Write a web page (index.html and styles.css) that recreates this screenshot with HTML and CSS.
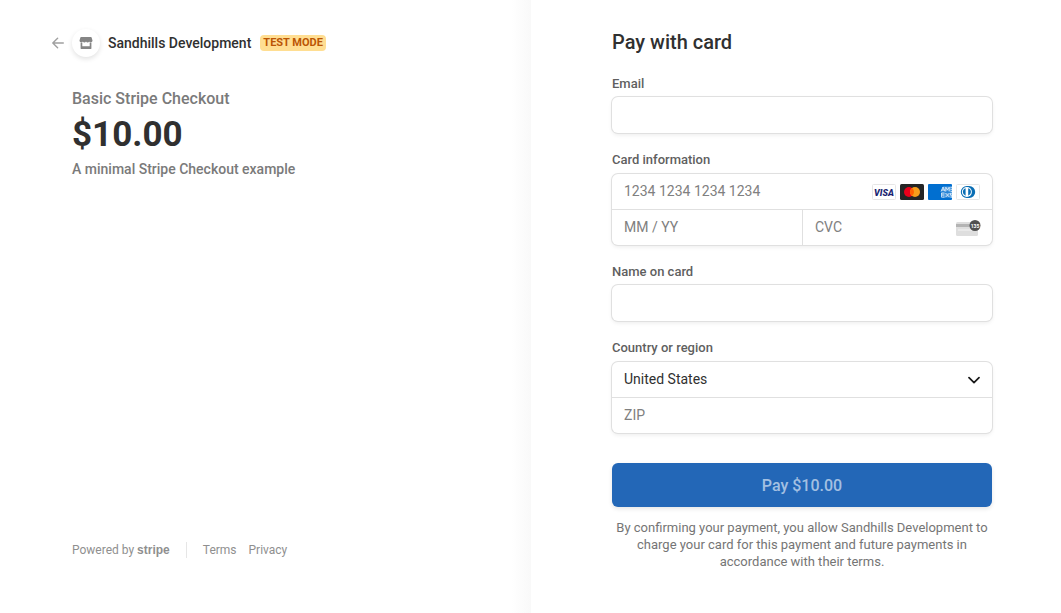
FILE: index.html
```html
<!DOCTYPE html>
<html lang="en">
<head>
    <meta charset="UTF-8">
    <meta name="viewport" content="width=device-width, initial-scale=1.0">
    <title>Sandhills Development</title>
    <link rel="stylesheet" href="styles.css">
</head>
<body>
<div class="app">
    <section class="overview">
        <header class="header">
            <a class="business" href="#" aria-label="Back to Sandhills Development">
                <svg class="back" viewBox="0 0 12 12" width="12" height="12" fill="none" stroke="#a0a0a0" stroke-width="1.4" stroke-linecap="round" stroke-linejoin="round"><path d="M11.3 6H1M5.6 1.2L.8 6l4.8 4.8"/></svg>
                <span class="avatar">
                    <svg viewBox="0 0 14 14" width="14" height="14" fill="#858585"><path d="M2 1h10a.6.6 0 0 1 .6.5l.9 3.1c0 1-.8 1.8-1.7 1.8-.8 0-1.4-.4-1.6-1-.3.6-.9 1-1.6 1S7.300 6 7 5.400C6.700 6 6.100 6.400 5.400 6.400s-1.300-.4-1.600-1c-.2.6-.8 1-1.600 1C1.300 6.400.5 5.600.5 4.600l.9-3.100A.6.6 0 0 1 2 1z"/><path d="M1.600 6.800h1.700v3.400h7.400V6.800h1.700v5.400a.9.9 0 0 1-.9.9h-9a.9.9 0 0 1-.9-.9z"/></svg>
                </span>
                <span class="business-name">Sandhills Development</span>
            </a>
            <span class="tag">TEST MODE</span>
        </header>
        <div class="product">
            <h1 class="product-name">Basic Stripe Checkout</h1>
            <div class="price">$10.00</div>
            <div class="description">A minimal Stripe Checkout example</div>
        </div>
        <footer class="footer">
            <a class="powered" href="#">Powered by <span class="stripe">stripe</span></a>
            <nav class="links">
                <a href="#">Terms</a>
                <a href="#">Privacy</a>
            </nav>
        </footer>
    </section>

    <main class="payment">
        <form class="form">
            <h2 class="title">Pay with card</h2>

            <div class="field">
                <label for="email">Email</label>
                <div class="box">
                    <input class="single" type="text" id="email">
                </div>
            </div>

            <div class="field">
                <label for="cardNumber">Card information</label>
                <div class="box stacked">
                    <div class="row">
                        <input type="text" id="cardNumber" placeholder="1234 1234 1234 1234">
                        <div class="brands">
                            <!-- Visa -->
                            <svg viewBox="0 0 24 16" width="24" height="16"><rect x=".5" y=".5" width="23" height="15" rx="1" fill="#fff" stroke="#e6e6e6"/><text class="visa" x="12" y="11.500" text-anchor="middle">VISA</text></svg>
                            <!-- Mastercard -->
                            <svg viewBox="0 0 24 16" width="24" height="16"><rect width="24" height="16" rx="1.500" fill="#252525"/><circle cx="9" cy="8" r="5" fill="#eb001b"/><circle cx="15" cy="8" r="5" fill="#f79e1b"/><path d="M12 4a5 5 0 0 1 0 8 5 5 0 0 1 0-8z" fill="#ff5f00"/></svg>
                            <!-- Amex -->
                            <svg viewBox="0 0 24 16" width="24" height="16"><rect width="24" height="16" rx="1" fill="#016fd0"/><path d="M15 2.500h9v5h-11zM13 8.500h11v5h-9z" fill="#fff" opacity=".3"/><path d="M13 7.500l2-4.500 2 4.500M13.800 6h2.500M17.800 7.500V3.200l1.700 2.600 1.700-2.600v4.300M22.500 3.300H24M22.500 5.400H24M22.500 7.500H24M16.500 9h-3v4.200h3M13.500 11h2.700M17.500 9l4 4.200M21.500 9l-4 4.200M24 9.200h-1.500v2H24v2h-1.500" fill="none" stroke="#fff" stroke-width=".7"/></svg>
                            <!-- Diners -->
                            <svg viewBox="0 0 24 16" width="24" height="16"><rect x=".5" y=".5" width="23" height="15" rx="1" fill="#fff" stroke="#e6e6e6"/><path d="M10.800 2h2.400a6 6 0 0 1 0 12h-2.400a6 6 0 0 1 0-12z" fill="#0a6eb4"/><circle cx="10.900" cy="8" r="5" fill="#fff"/><path d="M9.600 4.200a4 4 0 0 0 0 7.600zM12.200 4.200a4 4 0 0 1 0 7.600z" fill="#0a6eb4"/></svg>
                        </div>
                    </div>
                    <div class="row split">
                        <input type="text" placeholder="MM / YY" aria-label="Expiration">
                        <div class="cvc">
                            <input type="text" placeholder="CVC" aria-label="CVC">
                            <svg viewBox="0 0 26 18" width="26" height="18"><rect x="1" y="3" width="22" height="14" rx="1.500" fill="#dedede"/><rect x="1" y="5" width="22" height="3" fill="#b4b4b4"/><rect x="3" y="10" width="14" height="2" fill="#e9e9e9"/><circle cx="20" cy="6.500" r="5.500" fill="#505050"/><text class="digits" x="20" y="8.500" text-anchor="middle">135</text></svg>
                        </div>
                    </div>
                </div>
            </div>

            <div class="field">
                <label for="name">Name on card</label>
                <div class="box">
                    <input class="single" type="text" id="name">
                </div>
            </div>

            <div class="field">
                <label for="country">Country or region</label>
                <div class="box stacked">
                    <div class="row country">
                        <select id="country">
                            <option>United States</option>
                        </select>
                        <svg class="chevron" viewBox="0 0 12 12" width="12" height="12" fill="none" stroke="#1a1a1a" stroke-width="1.700" stroke-linecap="round" stroke-linejoin="round"><path d="M1 3.700l5 5 5-5"/></svg>
                    </div>
                    <div class="row">
                        <input type="text" placeholder="ZIP" aria-label="ZIP">
                    </div>
                </div>
            </div>

            <button class="pay" type="button">Pay $10.00</button>
            <p class="terms">By confirming your payment, you allow Sandhills Development to charge your card for this payment and future payments in accordance with their terms.</p>
        </form>
    </main>
</div>
</body>
</html>
```
FILE: styles.css
```css
* {
    box-sizing: border-box;
}

body {
    margin: 0;
    background: #fff;
    color: #303030;
    font-family: Roboto, "Liberation Sans", sans-serif;
    font-size: 14px;
}

a {
    color: inherit;
    text-decoration: none;
}

svg {
    display: block;
    flex: none;
}

.app {
    display: grid;
    grid-template-columns: 1fr 1fr;
    min-height: 100vh;
}

/* left side */
.overview {
    display: flex;
    flex-direction: column;
    padding: 29px 72px 55px 52px;
    background: linear-gradient(to left, #f9f9f9, #fff 20px);
}

.header,
.business {
    display: flex;
    align-items: center;
}

.header {
    gap: 9px;
}

.business {
    gap: 8px;
}

.avatar {
    display: flex;
    align-items: center;
    justify-content: center;
    width: 28px;
    height: 28px;
    border-radius: 50%;
    box-shadow: 0 2px 5px rgba(0, 0, 0, 0.12);
}

.business-name {
    font-weight: 500;
}

.tag {
    padding: 0 3px;
    border-radius: 4px;
    background: #ffde92;
    color: #bb5504;
    font-size: 11px;
    font-weight: 700;
    line-height: 16px;
}

.product {
    margin: 32px 0 auto 20px;
    color: #7a7a7a;
    font-weight: 500;
}

.product-name {
    margin: 0;
    font-size: 16px;
    font-weight: 500;
    line-height: 20px;
}

.price {
    color: #303030;
    font-size: 35px;
    font-weight: 700;
    line-height: 52px;
}

.description {
    line-height: 16px;
}

.footer {
    display: flex;
    align-items: center;
    margin-left: 20px;
    color: #8f8f8f;
    font-size: 12px;
    line-height: 16px;
}

.powered {
    padding-right: 16px;
    border-right: 1px solid #e6e6e6;
}

.stripe {
    font-family: "Liberation Sans", sans-serif;
    font-weight: 700;
}

.links {
    display: flex;
    gap: 12px;
    padding-left: 16px;
}

/* right side */
.payment {
    padding: 28px 69px 40px 40px;
}

.form {
    max-width: 380px;
    margin-left: auto;
}

.title {
    margin: 0 0 20px;
    font-size: 20px;
    font-weight: 500;
    line-height: 28px;
}

.field {
    margin-bottom: 19px;
}

.field label {
    display: block;
    margin-bottom: 5px;
    color: #5f5f5f;
    font-size: 13px;
    font-weight: 500;
    line-height: 16px;
}

.box {
    border-radius: 6px;
    background: #fff;
    box-shadow: 0 0 0 1px #e0e0e0, 0 2px 4px rgba(0, 0, 0, 0.08);
}

.stacked {
    margin-top: 6px;
}

.row {
    display: flex;
    align-items: center;
    height: 35px;
}

.row + .row {
    height: 36px;
    border-top: 1px solid #e0e0e0;
}

.row.split {
    display: grid;
    grid-template-columns: 1fr 1fr;
}

input,
select {
    flex: 1;
    width: 100%;
    min-width: 0;
    height: 100%;
    padding: 0 12px 2px;
    border: none;
    border-radius: 6px;
    outline: none;
    background: none;
    color: #303030;
    font: inherit;
}

input::placeholder {
    color: #808080;
    opacity: 1;
}

.single {
    display: block;
    height: 36px;
}

.brands {
    display: flex;
    gap: 4px;
    padding-right: 12px;
}

.visa {
    fill: #1a1f71;
    font-size: 9px;
    font-style: italic;
    font-weight: 900;
}

.cvc {
    display: flex;
    align-items: center;
    height: 100%;
    padding-right: 11px;
    border-left: 1px solid #e0e0e0;
}

.digits {
    fill: #fff;
    font-size: 5px;
    font-weight: 700;
}

.country {
    position: relative;
}

select {
    appearance: none;
}

.chevron {
    position: absolute;
    right: 12px;
    pointer-events: none;
}

.pay {
    display: block;
    width: 100%;
    height: 44px;
    margin-top: 30px;
    border: none;
    border-radius: 6px;
    background: #2367b7;
    box-shadow: 0 2px 4px rgba(0, 0, 0, 0.1);
    color: #a3c0e2;
    font: inherit;
    font-size: 16px;
    font-weight: 500;
}

.terms {
    margin: 12px 0 0;
    color: #757575;
    font-size: 13px;
    line-height: 17px;
    text-align: center;
}
```
